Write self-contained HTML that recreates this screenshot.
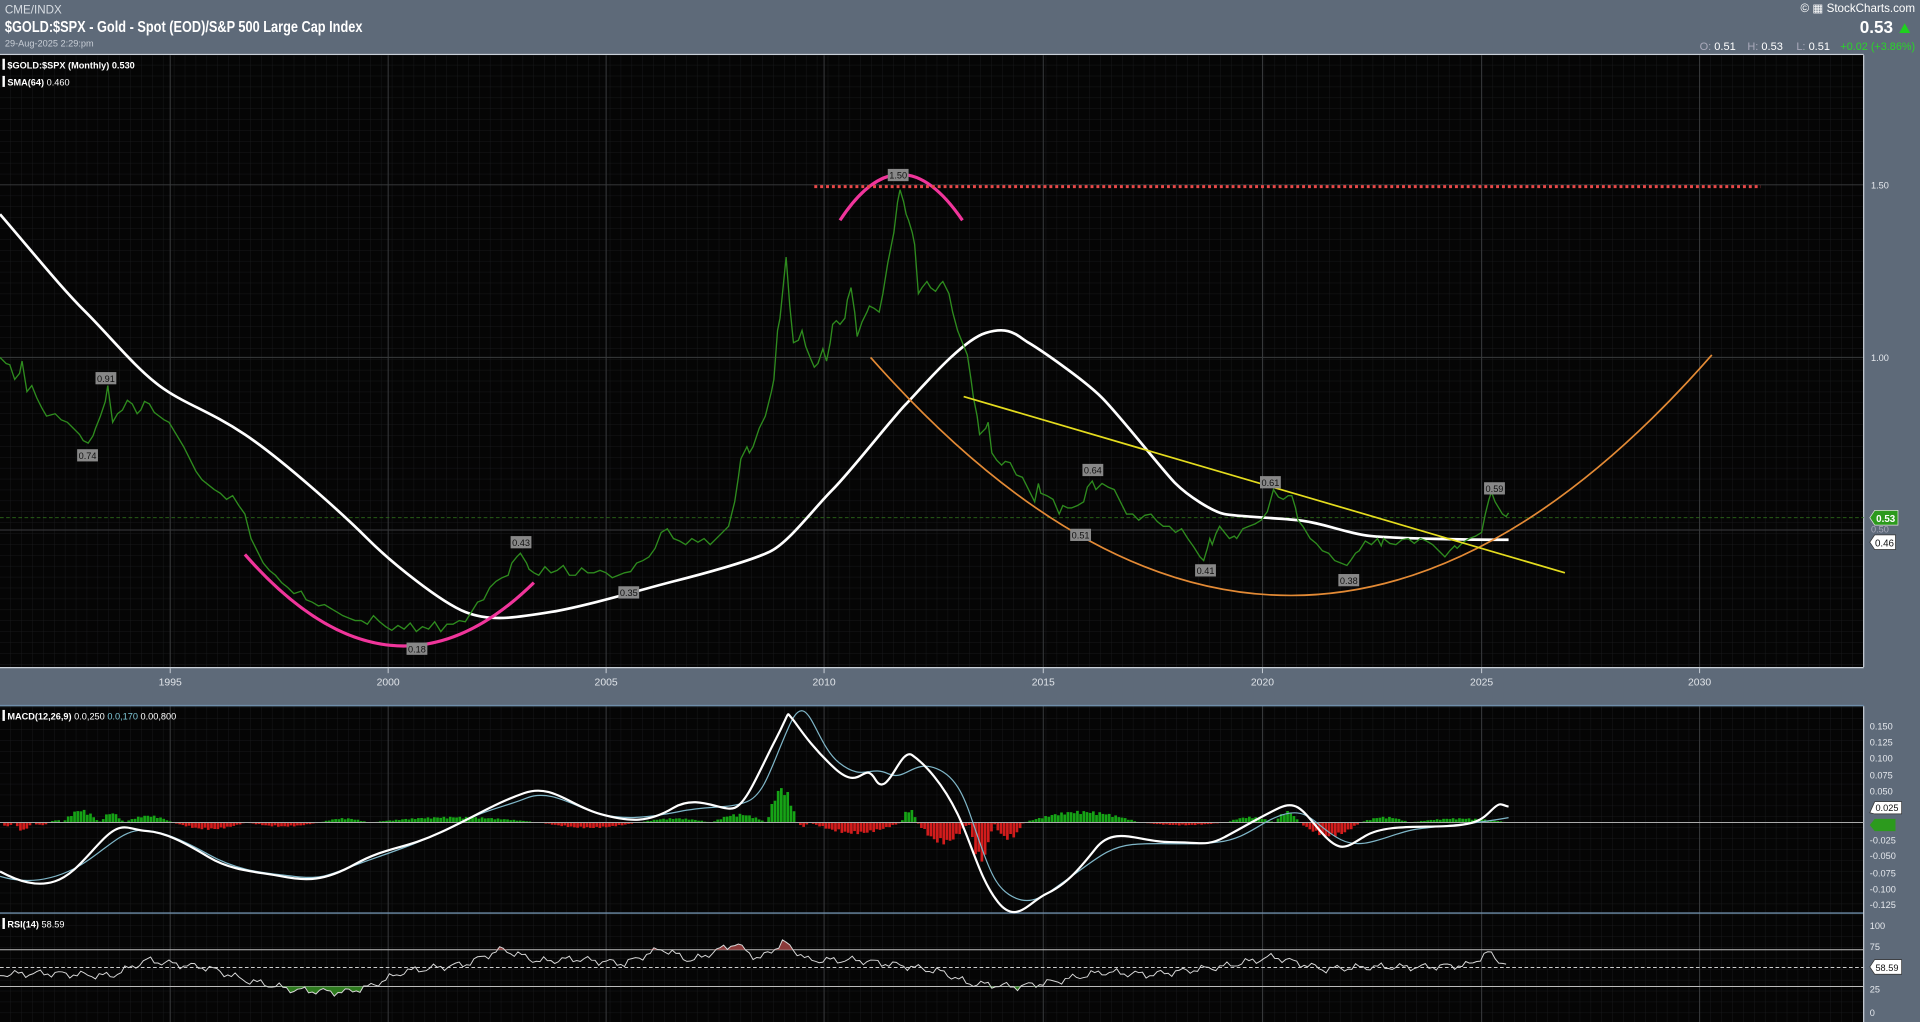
<!DOCTYPE html>
<html><head><meta charset="utf-8"><style>
html,body{margin:0;padding:0;background:#5e6a79;overflow:hidden}
svg{display:block}
text{font-family:"Liberation Sans",sans-serif}
</style></head><body>
<svg id="s" width="1920" height="1022" viewBox="0 0 1568 835" preserveAspectRatio="none" xmlns="http://www.w3.org/2000/svg">
<defs>
<pattern id="g" width="8.9" height="8.9" patternUnits="userSpaceOnUse" x="0" y="0">
<path d="M8.9 0V8.9M0 8.9H8.9" stroke="#1b1d1f" stroke-width="0.6" fill="none"/>
</pattern>
</defs>
<rect width="1568" height="835" fill="#5e6a79"/>
<text x="4" y="11" font-size="9.5" fill="#d8dde3">CME/INDX</text>
<text x="4" y="26" font-size="12.5" font-weight="bold" fill="#fff" textLength="292" lengthAdjust="spacingAndGlyphs">$GOLD:$SPX - Gold - Spot (EOD)/S&amp;P 500 Large Cap Index</text>
<text x="4" y="38" font-size="7.5" fill="#c8ced6">29-Aug-2025 2:29:pm</text>
<text x="1564" y="10" font-size="9.5" fill="#fff" text-anchor="end">© ▦ StockCharts.com</text>
<text x="1546" y="27" font-size="14" font-weight="bold" fill="#fff" text-anchor="end">0.53</text>
<polygon points="1551,27 1560,27 1555.5,19" fill="#1fd11f"/>
<g font-size="9" fill="#fff">
<text x="1388" y="41"><tspan fill="#aab">O:</tspan> 0.51</text>
<text x="1427" y="41"><tspan fill="#aab">H:</tspan> 0.53</text>
<text x="1467" y="41"><tspan fill="#aab">L:</tspan> 0.51</text>
<text x="1503" y="41" fill="#2ad42a" textLength="61" lengthAdjust="spacingAndGlyphs">+0.02 (+3.86%)</text>
</g>
<line x1="0" y1="44.5" x2="1522" y2="44.5" stroke="#c9d0d8" stroke-width="1"/>
<rect x="0" y="45" width="1522" height="500" fill="#050505"/>
<rect x="0" y="45" width="1522" height="500" fill="url(#g)"/>
<g stroke="#3a3c3e" stroke-width="0.8">
<line x1="139" y1="45" x2="139" y2="545"/><line x1="317" y1="45" x2="317" y2="545"/><line x1="495" y1="45" x2="495" y2="545"/><line x1="673" y1="45" x2="673" y2="545"/><line x1="852" y1="45" x2="852" y2="545"/><line x1="1031" y1="45" x2="1031" y2="545"/><line x1="1210" y1="45" x2="1210" y2="545"/><line x1="1388" y1="45" x2="1388" y2="545"/>
<line x1="0" y1="151" x2="1522" y2="151"/><line x1="0" y1="292" x2="1522" y2="292"/><line x1="0" y1="433" x2="1522" y2="433"/>
</g>
<line x1="1522" y1="45" x2="1522" y2="545" stroke="#c9d0d8" stroke-width="1"/>
<line x1="0" y1="545.5" x2="1522" y2="545.5" stroke="#c9d0d8" stroke-width="1"/>
<line x1="0" y1="423" x2="1522" y2="423" stroke="#2c6a1a" stroke-width="0.7" stroke-dasharray="3,2"/>
<rect x="2" y="48" width="2" height="9" fill="#fff"/><text x="6" y="56" font-size="7.5" font-weight="bold" fill="#fff">$GOLD:$SPX (Monthly) 0.530</text>
<rect x="2" y="62" width="2" height="9" fill="#fff"/><text x="6" y="70" font-size="7.5" font-weight="bold" fill="#fff">SMA(64) <tspan font-weight="normal">0.460</tspan></text>
<path d="M0,175 C30,210 50,235 70,255 S110,300 130,315 S170,335 200,355 S280,420 300,440 S360,492 380,500 S420,505 450,500 S530,480 550,475 S615,458 630,450 S665,415 680,400 S730,340 740,330 S785,278 805,272 S830,274 840,280 S885,310 900,325 S950,385 960,395 S990,418 1000,420 S1040,423 1060,425 S1100,436 1120,438 S1200,441 1232,441" fill="none" stroke="#fff" stroke-width="2.2"/>
<polyline fill="none" stroke="#2e8b1e" stroke-width="1.1" points="0,292 5,297 8,298 12,310 16,305 18,295 22,320 26,315 30,325 34,333 38,340 45,338 50,343 55,345 60,350 65,355 68,360 72,362 76,356 78,350 82,340 86,328 88,315 92,345 96,338 100,335 104,327 108,330 112,338 115,335 118,328 122,330 126,337 130,340 134,343 138,345 144,355 150,365 155,375 160,385 165,392 170,396 175,400 180,403 185,408 190,405 195,413 200,420 203,432 205,440 210,450 215,460 220,466 225,470 230,476 235,480 240,485 246,483 250,490 255,492 260,495 265,494 270,497 275,500 280,503 285,505 290,507 295,507 300,510 305,503 310,508 315,512 320,515 325,511 330,514 335,509 340,516 345,512 350,514 355,508 360,516 365,510 370,510 375,507 380,508 385,500 390,492 395,490 400,480 405,475 410,472 415,470 418,460 422,455 425,452 430,460 432,465 436,468 440,470 445,463 450,468 455,466 460,462 465,470 470,470 475,464 480,468 485,468 490,466 495,468 500,472 505,470 510,468 515,467 520,460 525,458 530,455 535,448 540,435 545,432 550,440 555,442 560,445 565,440 570,443 575,440 580,445 585,440 590,435 595,430 600,410 603,390 605,375 610,365 612,370 615,365 620,350 625,340 630,320 632,310 635,270 637,260 640,230 642,210 645,250 648,280 652,278 655,270 658,283 662,293 665,300 668,297 672,285 675,295 678,280 680,265 683,262 686,265 690,260 692,245 695,235 698,255 700,275 704,263 708,255 710,250 714,252 718,255 721,240 725,215 728,200 730,190 733,165 735,155 738,165 740,175 742,180 745,190 747,200 750,240 753,235 757,230 760,235 764,238 768,232 770,230 775,240 778,255 782,270 786,280 790,290 793,310 795,325 798,340 800,355 803,352 805,350 807,345 810,370 814,376 818,380 821,377 825,378 830,388 835,390 840,400 845,410 848,395 850,403 855,405 860,408 865,420 868,413 872,415 875,415 880,413 885,410 888,398 892,393 895,400 898,397 900,395 905,398 910,400 915,410 920,420 925,420 930,425 935,421 940,420 945,426 950,430 955,430 960,435 965,432 970,440 975,447 980,455 983,458 986,448 988,440 990,445 993,436 996,430 1000,435 1004,440 1008,438 1010,440 1015,432 1020,430 1025,428 1030,425 1035,418 1040,400 1044,406 1048,408 1052,405 1055,405 1058,415 1060,425 1064,430 1070,440 1075,444 1080,450 1085,452 1090,458 1095,460 1100,462 1103,458 1107,452 1110,450 1115,442 1120,445 1125,440 1128,446 1130,440 1135,444 1140,445 1145,441 1150,440 1155,444 1160,440 1165,442 1170,445 1175,450 1180,455 1184,450 1188,446 1190,448 1195,443 1200,440 1205,438 1210,435 1213,420 1216,408 1218,402 1221,410 1224,415 1227,420 1230,422 1232,419"/>
<path d="M200,453 Q320,590 436,476" fill="none" stroke="#f0359b" stroke-width="2.6"/>
<path d="M686,180 Q735,105 786,180" fill="none" stroke="#f0359b" stroke-width="2.6"/>
<line x1="665" y1="152.5" x2="1438" y2="152.5" stroke="#e84848" stroke-width="2.4" stroke-dasharray="2.4,2.4"/>
<path d="M711,292 Q1055,682 1398,290" fill="none" stroke="#e38a35" stroke-width="1.4"/>
<line x1="787" y1="324" x2="1278" y2="468" stroke="#e4dc1e" stroke-width="1.4"/>
<g font-size="7.5" fill="#111" text-anchor="middle">
<g fill="#888"><rect x="78" y="304" width="17" height="10"/><rect x="63" y="367" width="17" height="10"/><rect x="417" y="438" width="17" height="10"/><rect x="332" y="525" width="17" height="10"/><rect x="505" y="479" width="17" height="10"/><rect x="725" y="138" width="17" height="10"/><rect x="884" y="379" width="17" height="10"/><rect x="874" y="432" width="17" height="10"/><rect x="976" y="461" width="17" height="10"/><rect x="1029" y="389" width="17" height="10"/><rect x="1093" y="469" width="17" height="10"/><rect x="1212" y="394" width="17" height="10"/></g>
<text x="86.5" y="312">0.91</text><text x="71.5" y="375">0.74</text><text x="425.5" y="446">0.43</text><text x="340.5" y="533">0.18</text><text x="513.5" y="487">0.35</text><text x="733.5" y="146">1.50</text><text x="892.5" y="387">0.64</text><text x="882.5" y="440">0.51</text><text x="984.5" y="469">0.41</text><text x="1037.5" y="397">0.61</text><text x="1101.5" y="477">0.38</text><text x="1220.5" y="402">0.59</text>
</g>
<g font-size="7.5" fill="#e6e9ee"><text x="1528" y="154">1.50</text><text x="1528" y="295">1.00</text><text x="1528" y="435" fill="#aab">0.50</text></g>
<path d="M1527,423 L1531,417 H1550 V429 H1531 Z" fill="#2c9a1d" stroke="#ddd" stroke-width="0.6"/><text x="1540" y="426.5" font-size="8" font-weight="bold" fill="#fff" text-anchor="middle">0.53</text>
<path d="M1527,443 L1531,437 H1548 V449 H1531 Z" fill="#fff" stroke="#333" stroke-width="0.6"/><text x="1539" y="446.5" font-size="8" fill="#111" text-anchor="middle">0.46</text>
<g font-size="8.5" fill="#dfe3e8" text-anchor="middle"><text x="139" y="560">1995</text><text x="317" y="560">2000</text><text x="495" y="560">2005</text><text x="673" y="560">2010</text><text x="852" y="560">2015</text><text x="1031" y="560">2020</text><text x="1210" y="560">2025</text><text x="1388" y="560">2030</text></g>
<g stroke="#c9d0d8" stroke-width="0.8"><line x1="139" y1="546" x2="139" y2="550"/><line x1="317" y1="546" x2="317" y2="550"/><line x1="495" y1="546" x2="495" y2="550"/><line x1="673" y1="546" x2="673" y2="550"/><line x1="852" y1="546" x2="852" y2="550"/><line x1="1031" y1="546" x2="1031" y2="550"/><line x1="1210" y1="546" x2="1210" y2="550"/><line x1="1388" y1="546" x2="1388" y2="550"/></g>
<rect x="0" y="577" width="1522" height="258" fill="#050505"/>
<rect x="0" y="577" width="1522" height="258" fill="url(#g)"/>
<g stroke="#3a3c3e" stroke-width="0.8">
<line x1="139" y1="577" x2="139" y2="835"/><line x1="317" y1="577" x2="317" y2="835"/><line x1="495" y1="577" x2="495" y2="835"/><line x1="673" y1="577" x2="673" y2="835"/><line x1="852" y1="577" x2="852" y2="835"/><line x1="1031" y1="577" x2="1031" y2="835"/><line x1="1210" y1="577" x2="1210" y2="835"/><line x1="1388" y1="577" x2="1388" y2="835"/></g>
<line x1="0" y1="576.5" x2="1522" y2="576.5" stroke="#6f8eaa" stroke-width="1.2"/>
<line x1="0" y1="746" x2="1522" y2="746" stroke="#6f8eaa" stroke-width="1.2"/>
<line x1="1522" y1="577" x2="1522" y2="835" stroke="#c9d0d8" stroke-width="1"/>
<g id="hist"></g>
<line x1="0" y1="672" x2="1522" y2="672" stroke="#aaa" stroke-width="0.8"/>
<path d="M0,716 C20,722 40,720 60,710 S95,682 110,679 S145,684 170,698 S215,713 240,716 S270,714 295,705 S340,690 370,675 S410,660 430,652 S470,660 490,665 S530,668 555,663 S595,661 610,655 S630,625 645,592 S665,607 685,623 S710,625 725,632 S745,620 765,628 S790,660 800,688 S815,728 830,734 S855,730 875,716 S905,692 925,690 S970,691 995,688 S1030,670 1050,665 S1075,676 1095,686 S1135,680 1160,677 S1205,673 1232,668" fill="none" stroke="#7fb6c8" stroke-width="1"/>
<path d="M0,712 C15,720 30,725 45,720 S70,700 85,685 S105,678 120,679 S150,688 170,700 S210,712 230,716 S265,720 290,706 S330,694 360,680 S405,656 428,648 S465,658 490,665 S530,672 550,660 S590,664 600,660 S620,630 633,605 S642,582 646,586 S660,608 682,628 S705,620 715,637 S735,610 745,617 S770,640 782,665 S800,718 815,737 S840,737 855,730 S880,712 895,693 S930,688 955,688 S985,692 1000,684 S1030,667 1045,660 S1065,664 1080,681 S1100,692 1115,683 S1155,676 1180,675 S1210,670 1218,662 S1226,658 1232,659" fill="none" stroke="#fff" stroke-width="1.8"/>
<rect x="2" y="580" width="2" height="9" fill="#fff"/><text x="6" y="588" font-size="7.5" font-weight="bold" fill="#fff">MACD(12,26,9) <tspan font-weight="normal">0.0,250</tspan> <tspan fill="#7fc8d8" font-weight="normal">0.0,170</tspan> <tspan font-weight="normal">0.00,800</tspan></text>
<g font-size="7.5" fill="#e6e9ee"><text x="1527" y="596">0.150</text><text x="1527" y="609">0.125</text><text x="1527" y="622">0.100</text><text x="1527" y="636">0.075</text><text x="1527" y="649">0.050</text><text x="1527" y="689">-0.025</text><text x="1527" y="702">-0.050</text><text x="1527" y="716">-0.075</text><text x="1527" y="729">-0.100</text><text x="1527" y="742">-0.125</text></g>
<path d="M1527,674 L1531,669 H1548 V679 H1531 Z" fill="#2c9a1d"/>
<path d="M1527,664 L1531,655 H1553 V665 H1531 Z" fill="#fff" stroke="#333" stroke-width="0.6"/><text x="1541" y="662.5" font-size="7.5" fill="#111" text-anchor="middle">0.025</text>
<line x1="0" y1="776" x2="1522" y2="776" stroke="#bbb" stroke-width="0.8"/>
<line x1="0" y1="806" x2="1522" y2="806" stroke="#bbb" stroke-width="0.8"/>
<line x1="0" y1="790.5" x2="1522" y2="790.5" stroke="#ccc" stroke-width="0.8" stroke-dasharray="3,2"/>
<g id="rsi"></g>
<rect x="2" y="750" width="2" height="9" fill="#fff"/><text x="6" y="758" font-size="7.5" font-weight="bold" fill="#fff">RSI(14) <tspan font-weight="normal">58.59</tspan></text>
<g font-size="7.5" fill="#e6e9ee"><text x="1527" y="759">100</text><text x="1527" y="776">75</text><text x="1527" y="811">25</text><text x="1527" y="830">0</text></g>
<path d="M1527,790 L1531,784 H1553 V796 H1531 Z" fill="#fff" stroke="#333" stroke-width="0.6"/><text x="1541" y="793.5" font-size="7.5" fill="#111" text-anchor="middle">58.59</text>
</svg>
<script>
function seg(x){var S=[[0,10,-3],[10,25,-6],[25,40,-2],[40,50,2],[50,80,9],[80,100,7],[100,140,5],[140,200,-5],[200,260,-3],[260,300,3],[300,440,4],[440,520,-4],[520,580,3],[580,625,6],[625,650,25],[650,660,-3],[660,735,-8],[735,748,10],[748,790,-15],[790,810,-28],[810,835,-12],[835,930,8],[930,1000,-2],[1000,1040,4],[1040,1060,8],[1060,1110,-10],[1110,1150,4],[1150,1232,3]];
for(var i=0;i<S.length;i++){if(x>=S[i][0]&&x<S[i][1]){var a=S[i][0],b=S[i][1],t=(x-a)/(b-a);return S[i][2]*Math.sin(Math.PI*t)*(0.8+0.4*Math.abs(Math.sin(x*1.7)));}}return 0;}
var h=document.getElementById("hist"),s="";
for(var x=0;x<1232;x+=2.6){var v=seg(x);if(Math.abs(v)<0.3)continue;var y=v>0?672-v:672;s+='<rect x="'+x.toFixed(1)+'" y="'+y.toFixed(1)+'" width="2.2" height="'+Math.abs(v).toFixed(1)+'" fill="'+(v>0?'#16a316':'#d21c1c')+'"/>';}
h.innerHTML=s;
var K=[[0,796],[40,795],[90,797],[100,793],[120,784],[150,788],[170,790],[200,800],[240,808],[280,810],[300,806],[330,793],[380,787],[410,775],[440,785],[470,783],[510,787],[540,775],[565,785],[600,771],[620,784],[640,770],[660,785],[700,785],[740,790],[770,795],[790,804],[830,807],[860,803],[900,795],[940,797],[1000,790],[1040,782],[1080,792],[1120,790],[1160,790],[1200,788],[1215,778],[1225,785],[1232,787]];
function base(x){for(var i=0;i<K.length-1;i++){if(x>=K[i][0]&&x<=K[i+1][0]){var t=(x-K[i][0])/(K[i+1][0]-K[i][0]);return K[i][1]+(K[i+1][1]-K[i][1])*t;}}return 787;}
var pts=[];for(var x=0;x<=1232;x+=3){var y=base(x)+2.2*Math.sin(x*0.35)+1.3*Math.sin(x*0.9+1)+0.8*Math.sin(x*2.1);pts.push([x,y]);}
var r=document.getElementById("rsi"),out="",fillG="",fillR="";
for(var i=0;i<pts.length-1;i++){var p=pts[i],q=pts[i+1];
if(p[1]>806||q[1]>806)fillG+='M'+p[0].toFixed(1)+',806L'+p[0].toFixed(1)+','+Math.max(p[1],806).toFixed(1)+'L'+q[0].toFixed(1)+','+Math.max(q[1],806).toFixed(1)+'L'+q[0].toFixed(1)+',806Z';
if(p[1]<776||q[1]<776)fillR+='M'+p[0].toFixed(1)+',776L'+p[0].toFixed(1)+','+Math.min(p[1],776).toFixed(1)+'L'+q[0].toFixed(1)+','+Math.min(q[1],776).toFixed(1)+'L'+q[0].toFixed(1)+',776Z';}
out+='<path d="'+fillG+'" fill="#2d7a1e"/><path d="'+fillR+'" fill="#8a3a3a"/>';
out+='<polyline fill="none" stroke="#d8d8d8" stroke-width="0.8" points="'+pts.map(function(p){return p[0].toFixed(1)+','+p[1].toFixed(1)}).join(' ')+'"/>';
r.innerHTML=out;
</script>
</body></html>
